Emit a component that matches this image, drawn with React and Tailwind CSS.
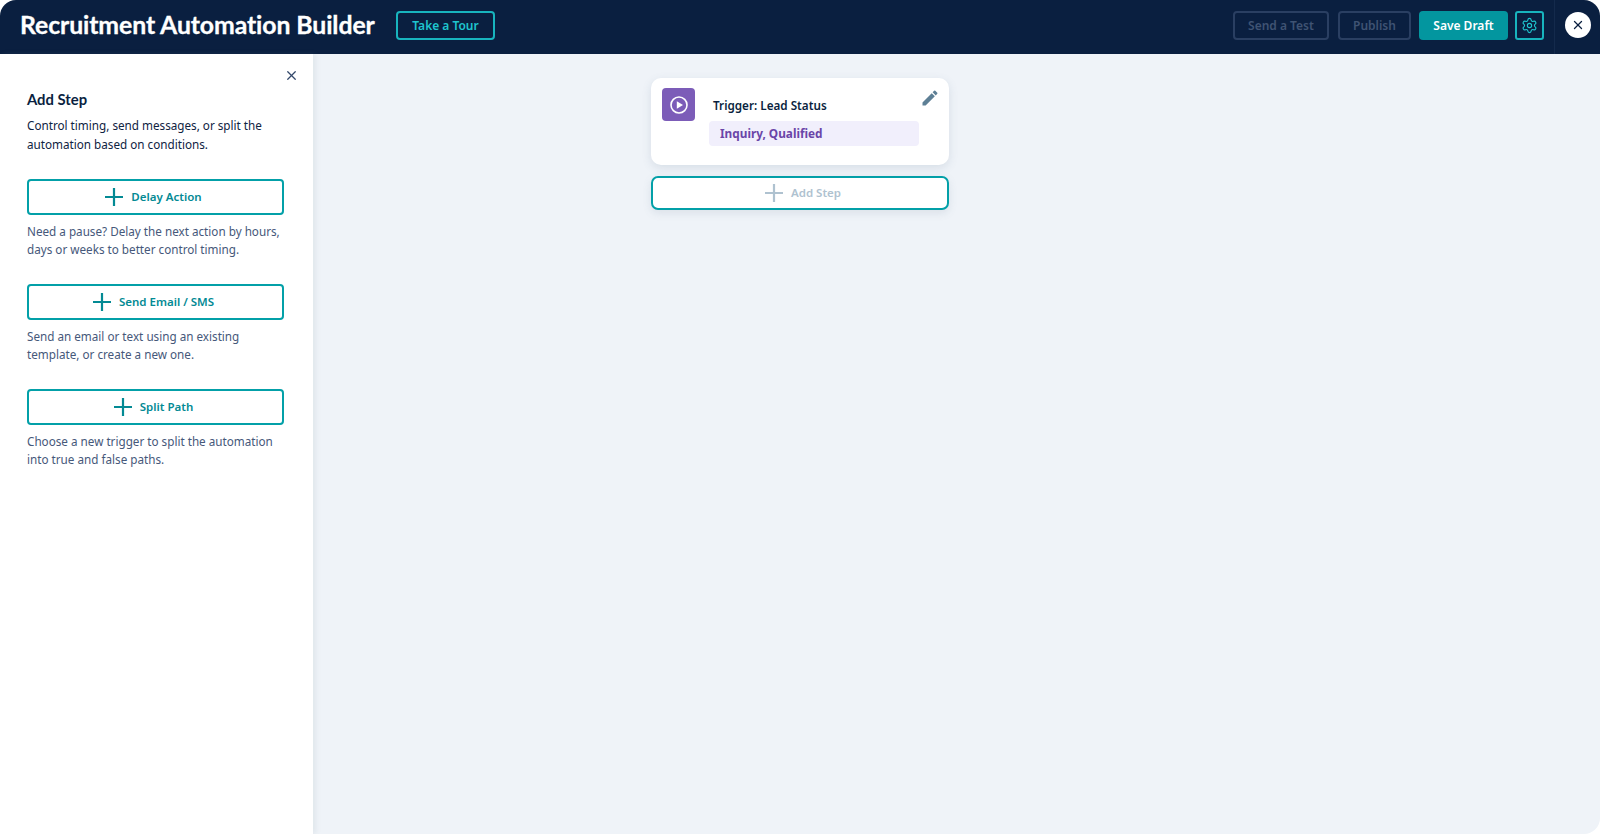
/**
 * Recruitment Automation Builder
 * 1600 x 834, header 54px, left panel 313px
 */

import { Settings, X } from 'lucide-react'
import { MdEdit } from 'react-icons/md'

const STEPS = [
  { label: 'Delay Action', text: ['Need a pause? Delay the next action by hours,', 'days or weeks to better control timing.'] },
  { label: 'Send Email / SMS', text: ['Send an email or text using an existing', 'template, or create a new one.'] },
  { label: 'Split Path', text: ['Choose a new trigger to split the automation', 'into true and false paths.'] },
]

function PlusIcon() {
  return (
    <svg width="18" height="18" viewBox="0 0 18 18" fill="none" stroke="currentColor" strokeWidth="2.2">
      <path d="M9 0v18M0 9h18" />
    </svg>
  )
}

function HeaderButton({ children, className }) {
  return (
    <button className={`h-[29px] rounded-[4px] text-[12px] font-semibold flex items-center justify-center ${className}`}>
      {children}
    </button>
  )
}

function Header() {
  return (
    <header className="h-[54px] shrink-0 bg-[#0a1f40] rounded-t-[16px] flex items-center pl-5">
      <h1 className="mb-[3px] font-['Lato',sans-serif] text-[24.8px] font-bold text-white tracking-[-0.1px] leading-none w-[376px] whitespace-nowrap [-webkit-text-stroke:0.3px_white]">
        Recruitment Automation Builder
      </h1>
      <HeaderButton className="mb-[3px] w-[99px] border-2 border-[#18b4be] text-[#1fc5cf]">Take a Tour</HeaderButton>
      <div className="mb-[3px] ml-auto flex items-center">
        <HeaderButton className="mr-[9px] w-[96px] border-2 border-[#2a3f62] text-[#3f5373]">Send a Test</HeaderButton>
        <HeaderButton className="mr-[8px] w-[73px] border-2 border-[#2a3f62] text-[#3f5373]">Publish</HeaderButton>
        <HeaderButton className="mr-[7px] w-[89px] bg-[#03969f] text-white font-bold">Save Draft</HeaderButton>
        <button className="w-[29px] h-[29px] rounded-[3px] border-2 border-[#18b4be] text-[#1fc5cf] flex items-center justify-center">
          <Settings size={17} strokeWidth={1.6} />
        </button>
      </div>
      <div className="ml-[10px] h-[54px] w-[11px] border-l border-[#142a4c]" />
      <button className="mb-[5px] w-[26px] h-[26px] rounded-full bg-white text-[#0a1f40] flex items-center justify-center mr-[9px]">
        <X size={14} strokeWidth={2.2} />
      </button>
    </header>
  )
}

function StepOption({ label, text }) {
  return (
    <div className="mb-[26px]">
      <button className="w-[257px] h-[36px] pr-[4px] rounded-[4px] border-2 border-[#03a0a8] text-[#038a94] text-[11.5px] font-semibold flex items-center justify-center gap-[8px]">
        <PlusIcon />
        {label}
      </button>
      <p className="mt-[7px] text-[11.7px] leading-[18px] text-[#46587a] whitespace-nowrap">
        {text.map((line) => (
          <span key={line} className="block">{line}</span>
        ))}
      </p>
    </div>
  )
}

function SidePanel() {
  return (
    <aside className="relative w-[313px] shrink-0 bg-white pl-[27px] pt-[36px] shadow-[3px_0_5px_rgba(120,150,160,0.12)] z-10">
      <button className="absolute right-[14px] top-[14px] text-[#33486a]">
        <X size={15} strokeWidth={2} />
      </button>
      <h2 className="font-['Lato',sans-serif] text-[14.8px] font-bold text-[#0a1f40] leading-[18px]">Add Step</h2>
      <p className="mt-[8px] mb-[25px] text-[11.7px] leading-[19px] text-[#0f2342] whitespace-nowrap">
        <span className="block">Control timing, send messages, or split the</span>
        <span className="block">automation based on conditions.</span>
      </p>
      {STEPS.map((step) => (
        <StepOption key={step.label} {...step} />
      ))}
    </aside>
  )
}

function TriggerCard() {
  return (
    <div className="relative w-[298px] h-[87px] rounded-[10px] bg-white shadow-[0_3px_10px_rgba(90,110,140,0.16)] pl-[11px] pt-[10px] flex">
      <div className="w-[33px] h-[33px] rounded-[4px] bg-[#7c5cb8] flex items-center justify-center">
        <svg width="20" height="20" viewBox="0 0 20 20" fill="none">
          <circle cx="10" cy="10" r="8" stroke="white" strokeWidth="1.6" />
          <path d="M7.8 6.2 14 10l-6.2 3.8z" fill="white" />
        </svg>
      </div>
      <div className="ml-[14px]">
        <div className="pl-[4px] mt-[8px] text-[11.7px] leading-[18px] font-semibold text-[#0a1f40]">Trigger: Lead Status</div>
        <div className="mt-[7px] w-[210px] h-[25px] rounded-[4px] bg-[#f1effc] pl-[11px] flex items-center text-[11.8px] font-bold text-[#6a45a8]">
          Inquiry, Qualified
        </div>
      </div>
      <MdEdit size={20} className="absolute right-[9px] top-[10px] text-[#5d7f95]" />
    </div>
  )
}

function Canvas() {
  return (
    <main className="flex-1 bg-[#eff3f8] rounded-br-[16px] pl-[338px] pt-[24px]">
      <TriggerCard />
      <button className="mt-[11px] w-[298px] h-[34px] pl-[6px] rounded-[7px] border-2 border-[#03a0a8] bg-white text-[#afc2d0] text-[11.5px] font-semibold flex items-center justify-center gap-[8px] shadow-[0_3px_8px_rgba(90,110,140,0.14)]">
        <PlusIcon />
        Add Step
      </button>
    </main>
  )
}

export default function App() {
  return (
    <div className="w-[1600px] h-[834px] bg-white flex flex-col overflow-hidden font-['Noto_Sans',sans-serif]">
      <Header />
      <div className="flex-1 flex min-h-0">
        <SidePanel />
        <Canvas />
      </div>
    </div>
  )
}
